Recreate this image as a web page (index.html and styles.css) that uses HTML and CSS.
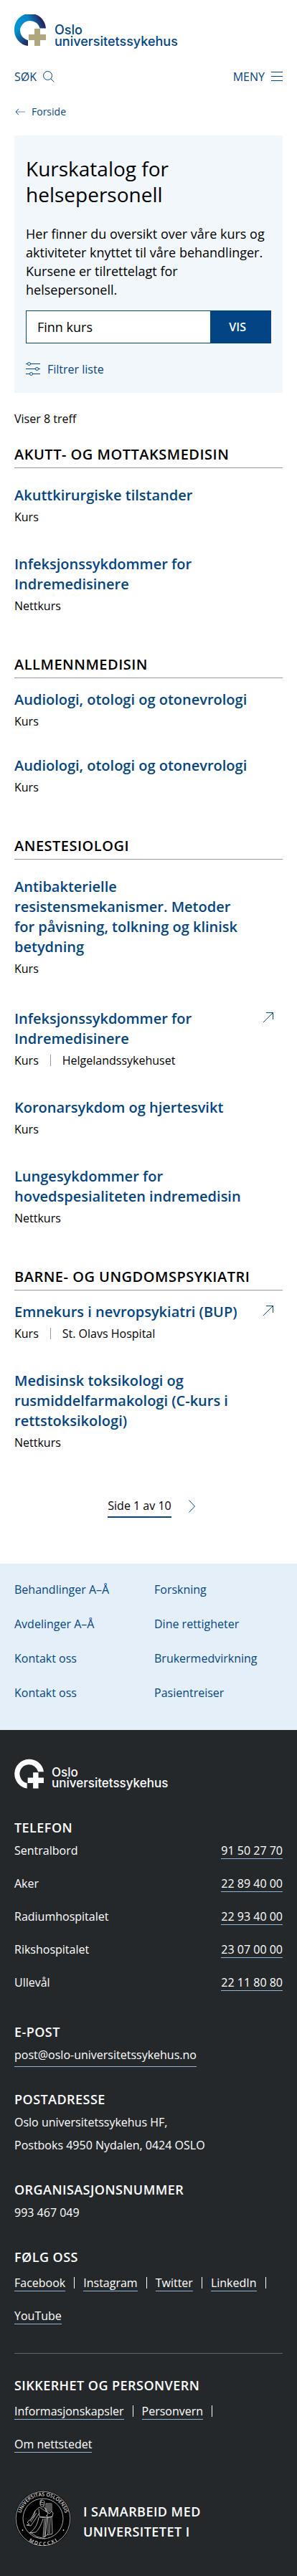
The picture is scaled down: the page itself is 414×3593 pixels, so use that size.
FILE: index.html
```html
<!DOCTYPE html>
<html lang="no">
<head>
<meta charset="utf-8">
<meta name="viewport" content="width=device-width, initial-scale=1">
<title>Kurskatalog for helsepersonell - Oslo universitetssykehus</title>
<link rel="stylesheet" href="styles.css">
</head>
<body>
<header class="header">
  <a class="logo" href="#">
    <svg class="logo__mark" viewBox="0 0 44 44" aria-hidden="true">
      <defs>
        <linearGradient id="ring" x1="0" y1="0.6" x2="1" y2="0.35">
          <stop offset="0.15" stop-color="#0095d5"/>
          <stop offset="0.5" stop-color="#0a80c0"/>
          <stop offset="0.85" stop-color="#262760"/>
        </linearGradient>
        <linearGradient id="tail" x1="0" y1="0" x2="1" y2="1">
          <stop offset="0.1" stop-color="#0095d5"/>
          <stop offset="0.9" stop-color="#262760"/>
        </linearGradient>
      </defs>
      <path fill="url(#ring)" d="M0 22A22 22 0 0 1 44 19.500H35.500A14 14 0 0 0 8 22Z"/>
      <path fill="url(#tail)" d="M0 21.500A22 22 0 0 0 19 44V36A14 14 0 0 1 8 21.500Z"/>
      <path fill="#b1a77c" d="M28 20h8v8h8v8h-8v8h-8v-8h-8v-8h8z"/>
    </svg>
    <span class="logo__text">Oslo<br>universitetssykehus</span>
  </a>
  <div class="header__tools">
    <button class="tool" type="button">SØK
      <svg width="16" height="16" viewBox="0 0 16 16" fill="none" stroke="#034584" aria-hidden="true"><circle cx="6.500" cy="6.500" r="6"/><path d="M10.700 10.700 15.500 15.500"/></svg>
    </button>
    <button class="tool" type="button">MENY
      <svg width="16" height="14" viewBox="0 0 16 14" fill="none" stroke="#034584" aria-hidden="true"><path d="M0 .5h16M0 6.500h16M0 12.500h16"/></svg>
    </button>
  </div>
</header>
<main class="main">
  <nav class="crumbs" aria-label="Brødsmuler">
    <a class="crumbs__link" href="#">
      <svg width="16" height="10" viewBox="0 0 16 10" fill="none" stroke="#6c92b8" aria-hidden="true"><path d="M2 5h13"/><path stroke="#034584" d="M6 .8 2 5l4 4.200"/></svg>
      Forside</a>
  </nav>
  <section class="hero">
    <h1 class="hero__title">Kurskatalog for helsepersonell</h1>
    <p class="hero__lead">Her finner du oversikt over våre kurs og aktiviteter knyttet til våre behandlinger. Kursene er tilrettelagt for helsepersonell.</p>
    <form class="search">
      <input class="search__input" type="text" placeholder="Finn kurs" aria-label="Finn kurs">
      <button class="search__button" type="button">VIS</button>
    </form>
    <button class="filter" type="button">
      <svg width="20" height="20" viewBox="0 0 20 20" fill="none" stroke="#034584" aria-hidden="true"><path d="M0 2.500h2.500M6.500 2.500H20M0 9.500h13.500M17.500 9.500H20M0 16.500h5.500M9.500 16.500H20"/><circle cx="4.500" cy="2.500" r="2"/><circle cx="15.500" cy="9.500" r="2"/><circle cx="7.500" cy="16.500" r="2"/></svg>
      Filtrer liste
    </button>
  </section>
  <p class="hits">Viser 8 treff</p>

  <section class="group">
    <h2 class="group__title">AKUTT- OG MOTTAKSMEDISIN</h2>
    <ul class="courses courses--roomy">
      <li class="course"><h3 class="course__title"><a href="#">Akuttkirurgiske tilstander</a></h3><p class="course__meta"><span>Kurs</span></p></li>
      <li class="course"><h3 class="course__title"><a href="#">Infeksjonssykdommer for Indremedisinere</a></h3><p class="course__meta"><span>Nettkurs</span></p></li>
    </ul>
  </section>
  <section class="group">
    <h2 class="group__title">ALLMENNMEDISIN</h2>
    <ul class="courses courses--tight">
      <li class="course"><h3 class="course__title"><a href="#">Audiologi, otologi og otonevrologi</a></h3><p class="course__meta"><span>Kurs</span></p></li>
      <li class="course"><h3 class="course__title"><a href="#">Audiologi, otologi og otonevrologi</a></h3><p class="course__meta"><span>Kurs</span></p></li>
    </ul>
  </section>
  <section class="group">
    <h2 class="group__title">ANESTESIOLOGI</h2>
    <ul class="courses courses--roomy">
      <li class="course course--long"><h3 class="course__title"><a href="#">Antibakterielle resistensmekanismer. Metoder for påvisning, tolkning og klinisk betydning</a></h3><p class="course__meta"><span>Kurs</span></p></li>
      <li class="course">
        <h3 class="course__title"><a href="#">Infeksjonssykdommer for Indremedisinere</a></h3>
        <svg class="course__out" width="16" height="16" viewBox="0 0 16 16" fill="none" stroke="#034584" aria-hidden="true"><path d="M1 15 15 1M5 1.500h9.500V11"/></svg>
        <p class="course__meta"><span>Kurs</span><span>Helgelandssykehuset</span></p>
      </li>
      <li class="course"><h3 class="course__title"><a href="#">Koronarsykdom og hjertesvikt</a></h3><p class="course__meta"><span>Kurs</span></p></li>
      <li class="course"><h3 class="course__title"><a href="#">Lungesykdommer for hovedspesialiteten indremedisin</a></h3><p class="course__meta"><span>Nettkurs</span></p></li>
    </ul>
  </section>
  <section class="group">
    <h2 class="group__title">BARNE- OG UNGDOMSPSYKIATRI</h2>
    <ul class="courses">
      <li class="course">
        <h3 class="course__title"><a href="#">Emnekurs i nevropsykiatri (BUP)</a></h3>
        <svg class="course__out" width="16" height="16" viewBox="0 0 16 16" fill="none" stroke="#034584" aria-hidden="true"><path d="M1 15 15 1M5 1.500h9.500V11"/></svg>
        <p class="course__meta"><span>Kurs</span><span>St. Olavs Hospital</span></p>
      </li>
      <li class="course"><h3 class="course__title"><a href="#">Medisinsk toksikologi og rusmiddelfarmakologi (C-kurs i rettstoksikologi)</a></h3><p class="course__meta"><span>Nettkurs</span></p></li>
    </ul>
  </section>
  <nav class="pager" aria-label="Sider">
    <span class="pager__current">Side 1 av 10</span>
    <a class="pager__next" href="#" aria-label="Neste side"><svg width="10" height="18" viewBox="0 0 10 18" fill="none" stroke="#034584" aria-hidden="true"><path d="M.5.5 8.500 9 .5 17.500"/></svg></a>
  </nav>
</main>

<nav class="shortcuts" aria-label="Snarveier">
  <a href="#">Behandlinger A–Å</a><a href="#">Forskning</a>
  <a href="#">Avdelinger A–Å</a><a href="#">Dine rettigheter</a>
  <a href="#">Kontakt oss</a><a href="#">Brukermedvirkning</a>
  <a href="#">Kontakt oss</a><a href="#">Pasientreiser</a>
</nav>

<footer class="footer">
  <a class="logo logo--footer" href="#">
    <svg class="logo__mark" viewBox="0 0 44 44" fill="#fff" aria-hidden="true">
      <path d="M44 19A22 22 0 1 0 19 44V36A14 14 0 1 1 35.500 19Z"/>
      <path d="M28 20h8v8h8v8h-8v8h-8v-8h-8v-8h8z"/>
    </svg>
    <span class="logo__text">Oslo<br>universitetssykehus</span>
  </a>
  <section class="block block--phones">
    <h2 class="block__title">TELEFON</h2>
    <dl class="phones">
      <div class="phones__row"><dt>Sentralbord</dt><dd><a class="link" href="#">91 50 27 70</a></dd></div>
      <div class="phones__row"><dt>Aker</dt><dd><a class="link" href="#">22 89 40 00</a></dd></div>
      <div class="phones__row"><dt>Radiumhospitalet</dt><dd><a class="link" href="#">22 93 40 00</a></dd></div>
      <div class="phones__row"><dt>Rikshospitalet</dt><dd><a class="link" href="#">23 07 00 00</a></dd></div>
      <div class="phones__row"><dt>Ullevål</dt><dd><a class="link" href="#">22 11 80 80</a></dd></div>
    </dl>
  </section>
  <section class="block">
    <h2 class="block__title">E-POST</h2>
    <a class="mail" href="#">post@oslo-universitetssykehus.no</a>
  </section>
  <section class="block">
    <h2 class="block__title">POSTADRESSE</h2>
    <p>Oslo universitetssykehus HF,<br>Postboks 4950 Nydalen, 0424 OSLO</p>
  </section>
  <section class="block">
    <h2 class="block__title">ORGANISASJONSNUMMER</h2>
    <p>993 467 049</p>
  </section>
  <section class="block">
    <h2 class="block__title">FØLG OSS</h2>
    <ul class="links">
      <li><a class="link" href="#">Facebook</a></li>
      <li><a class="link" href="#">Instagram</a></li>
      <li><a class="link" href="#">Twitter</a></li>
      <li><a class="link" href="#">LinkedIn</a></li>
      <li><a class="link" href="#">YouTube</a></li>
    </ul>
  </section>
  <section class="block block--ruled">
    <h2 class="block__title">SIKKERHET OG PERSONVERN</h2>
    <ul class="links">
      <li><a class="link" href="#">Informasjonskapsler</a></li>
      <li><a class="link" href="#">Personvern</a></li>
      <li><a class="link" href="#">Om nettstedet</a></li>
    </ul>
  </section>
  <div class="partner">
    <svg class="partner__seal" viewBox="0 0 80 80" aria-hidden="true">
      <defs>
        <path id="arcTop" d="M10.700 51.500A31.500 31.500 0 1 1 69.300 51.500"/>
        <path id="arcBottom" d="M5 48A35.500 35.500 0 0 0 75 48"/>
      </defs>
      <circle cx="40" cy="40" r="39" fill="#000"/>
      <g fill="none" stroke="#bbb">
        <circle cx="40" cy="40" r="37.800" stroke-width=".9"/>
        <circle cx="40" cy="40" r="28" stroke-width=".9"/>
        <path stroke-width=".9" d="M36 15c2-2 6-1 6 2l-1 6-3 1-2-3zM35 24l-6 5-2 8-9 8 3 3-4 1 6 1 12-18M34 27l1 10 10 1 2-6-5-7M35 24l9 6 5-1M41 24l4 3M44 19h8v11l-3 3-5-3zM46 20v9M48 20v10M50 20v9M52 30l2 2-1 5-6 1-3-3M34 38c-1 8-5 17-13 22l9-1c5-5 8-12 10-19M42 40l-2 26 3-1 3-27M44 40l-2 26 5-5V38M52 37l1 24-7 2M50 38l-1 23M35 38l10 1 8-2M29 29l-7 14M31 32l-8 13M37 17l4 1M36 20l5 1M38 14l-2 5M22 59l9 6 12 3"/>
      </g>
      <path fill="#555" d="M45 19h7v10l-3 2-4-2z"/>
      <g class="seal-text">
        <text><textPath href="#arcTop" startOffset="50%" text-anchor="middle">UNIVERSITAS OSLOENSIS</textPath></text>
        <text><textPath href="#arcBottom" startOffset="50%" text-anchor="middle">M D C C C X I</textPath></text>
      </g>
      <circle cx="11.500" cy="56" r=".9" fill="#ddd"/><circle cx="68.500" cy="56" r=".9" fill="#ddd"/>
    </svg>
    <p class="partner__text">I SAMARBEID MED UNIVERSITETET I OSLO</p>
  </div>
</footer>
</body>
</html>
```
FILE: styles.css
```css
* {
  box-sizing: border-box;
}

body,
h1,
h2,
h3,
p,
ul,
dl,
dd {
  margin: 0;
  padding: 0;
}

body {
  background: #fff;
  color: #000;
  font: 16px/28px "Open Sans", "Noto Sans", sans-serif;
}

ul {
  list-style: none;
}

a {
  color: #034584;
  text-decoration: none;
}

button {
  padding: 0;
  border: 0;
  background: none;
  color: #034584;
  font: inherit;
}

svg {
  flex: none;
}

/* Header */
.header {
  padding: 20px 20px 0;
}

.logo {
  display: flex;
  gap: 12px;
  height: 48px;
}

.logo__mark {
  width: 44px;
  height: 44px;
}

.logo__text {
  padding-top: 14px;
  font: 500 18px/16px Inter, sans-serif;
}

.header__tools {
  display: flex;
  justify-content: space-between;
  margin-top: 27px;
}

.tool {
  display: flex;
  align-items: center;
  gap: 9px;
  line-height: 24px;
}

/* Main */
.main {
  padding: 25px 20px 64px;
}

.crumbs {
  display: flex;
  padding-bottom: 21px;
}

.crumbs__link {
  display: flex;
  align-items: center;
  gap: 8px;
  font-size: 14px;
  line-height: 24px;
}

.hero {
  padding: 28px 16px 19px;
  background: #f2f7fb;
}

.hero__title {
  font-size: 28px;
  font-weight: 400;
  line-height: 36px;
}

.hero__lead {
  margin-top: 24px;
  font-size: 18px;
  line-height: 26px;
}

.search {
  display: flex;
  margin-top: 16px;
}

.search__input {
  flex: 1;
  min-width: 0;
  height: 46px;
  padding: 0 15px;
  border: 1px solid #034584;
  border-right: 0;
  border-radius: 0;
  background: #fff;
  font: inherit;
  font-size: 18px;
}

.search__input::placeholder {
  color: #000;
  opacity: 1;
}

.search__button {
  padding: 0 35px 0 26px;
  background: #034584;
  color: #fff;
  font-weight: 600;
}

.filter {
  display: flex;
  align-items: center;
  gap: 10px;
  margin-top: 22px;
}

.hits {
  padding: 22px 0;
}

.group__title {
  padding-bottom: 4px;
  border-bottom: 1px solid #979797;
  font-size: 20px;
  font-weight: 600;
  letter-spacing: 0.025em;
}

.group + .group {
  margin-top: 52px;
}

.courses {
  display: flex;
  flex-direction: column;
  gap: 36px;
  padding-top: 16px;
}

.courses--roomy {
  padding-top: 24px;
}

.courses--tight {
  gap: 32px;
}

.course {
  display: grid;
  grid-template-columns: 1fr 16px;
  column-gap: 16px;
  padding-right: 12px;
}

.course--long {
  padding-bottom: 4px;
}

.course__title {
  font-size: 20px;
  font-weight: 600;
}

.course__out {
  margin-top: 4px;
}

.course__meta {
  display: flex;
  grid-column: 1 / -1;
  line-height: 32px;
}

.course__meta span + span {
  display: flex;
  align-items: center;
}

.course__meta span + span::before {
  content: "";
  width: 1px;
  height: 16px;
  margin: 0 16px;
  background: #979797;
}

.pager {
  display: flex;
  align-items: center;
  justify-content: center;
  gap: 24px;
  margin-top: 57px;
  padding-left: 9px;
}

.pager__current {
  border-bottom: 2px solid #034584;
  line-height: 30px;
}

.pager__next {
  display: flex;
}

/* Shortcuts */
.shortcuts {
  display: grid;
  grid-template-columns: 1fr 1fr;
  gap: 24px 16px;
  padding: 24px 20px 40px;
  background: #e4eff9;
  line-height: 24px;
}

/* Footer */
.footer {
  padding: 40px 20px;
  background: #24282b;
  color: #fff;
  line-height: 32px;
}

.footer a {
  color: #fff;
}

.logo--footer {
  gap: 11px;
}

.logo--footer .logo__mark {
  width: 41px;
  height: 42px;
}

.logo--footer .logo__text {
  padding-top: 12px;
  font-size: 17px;
  line-height: 15px;
}

.block {
  margin-top: 30px;
}

.block--phones {
  margin-top: 32px;
  padding-bottom: 7px;
}

.block--ruled {
  margin-top: 36px;
  padding-top: 28px;
  border-top: 1px solid #616466;
}

.block__title {
  font-size: 18px;
  font-weight: 600;
  letter-spacing: 0.025em;
}

.phones {
  display: grid;
  gap: 14px;
}

.phones__row {
  display: flex;
  justify-content: space-between;
  height: 32px;
}

.link {
  display: inline-block;
  border-bottom: 1px solid #8fb6d9;
  line-height: 22px;
}

.mail {
  display: block;
  width: fit-content;
  margin-bottom: -1px;
  border-bottom: 1px solid #8fb6d9;
}

.links {
  display: flex;
  flex-wrap: wrap;
  gap: 14px 12px;
  margin-top: 4px;
}

.links li {
  display: flex;
  align-items: center;
  height: 32px;
}

.links li:not(:last-child)::after {
  content: "";
  width: 1px;
  height: 16px;
  margin-left: 12px;
  background: #fff;
}

.partner {
  display: flex;
  gap: 16px;
  height: 80px;
  margin-top: 48px;
  overflow: hidden;
}

.partner__seal {
  width: 80px;
  height: 80px;
}

.partner__text {
  max-width: 200px;
  padding-top: 16px;
  font-size: 18px;
  font-weight: 600;
  line-height: 28px;
  letter-spacing: 0.025em;
}

.seal-text {
  fill: #ddd;
  font: 600 7px "Open Sans", sans-serif;
}
```
